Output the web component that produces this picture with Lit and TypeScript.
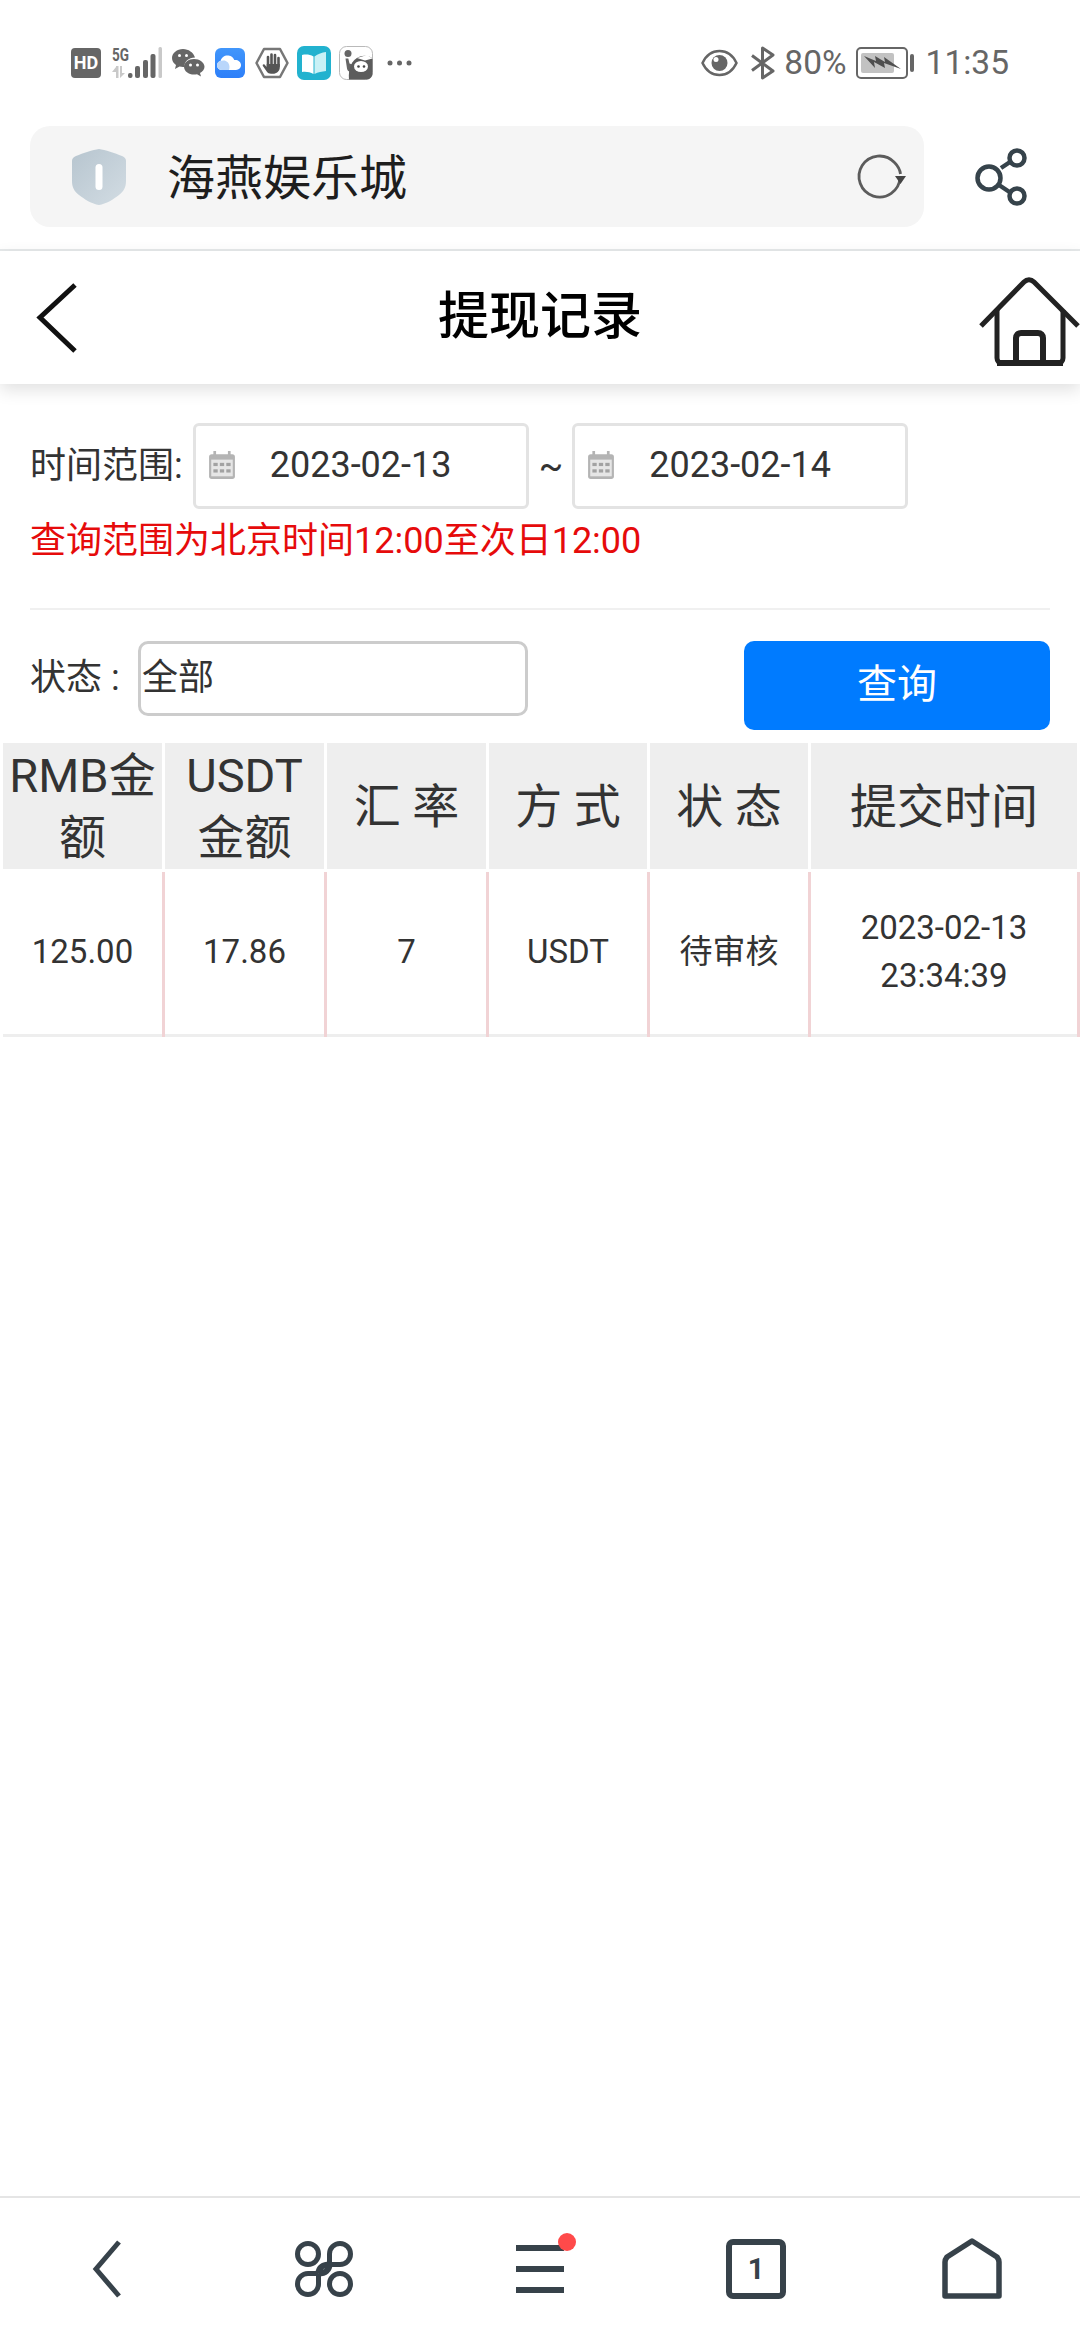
import { LitElement, css, html, svg } from 'lit';
import { customElement } from 'lit/decorators.js';

const HEADS = ['RMB金额', 'USDT金额', '汇 率', '方 式', '状 态', '提交时间'];
const ROW = ['125.00', '17.86', '7', 'USDT', '待审核', '2023-02-13 23:34:39'];

const calendar = svg`
  <rect x="1" y="3" width="24" height="23" rx="2.5" fill="#b4b4b4" />
  <rect x="5" y="0" width="2.5" height="5" fill="#b4b4b4" />
  <rect x="18.5" y="0" width="2.5" height="5" fill="#b4b4b4" />
  <rect x="3" y="8" width="20" height="15.5" fill="#e6e6e6" />
  <g fill="#a2a2a2">
    <rect x="5" y="11" width="4" height="3" /><rect x="11" y="11" width="4" height="3" /><rect x="17" y="11" width="4" height="3" />
    <rect x="5" y="17" width="4" height="3" /><rect x="11" y="17" width="4" height="3" /><rect x="17" y="17" width="4" height="3" />
  </g>`;

@customElement('app-root')
export class AppRoot extends LitElement {
  static styles = css`
    :host {
      display: block;
      font-family: Roboto, "Noto Sans CJK SC", sans-serif;
      color: #333;
      background: #fff;
    }
    * { box-sizing: border-box; }
    svg { display: block; flex: none; overflow: visible; }

    .page {
      display: flex;
      flex-direction: column;
      height: 2340px;
      overflow: hidden;
    }

    .status {
      display: flex;
      justify-content: space-between;
      align-items: center;
      height: 125px;
      padding: 0 71px;
      color: #666;
      font-size: 33.5px;
    }
    .status-left, .status-right, .apps { display: flex; align-items: center; }
    .status-left { gap: 10px; }
    .apps { gap: 8px; }
    .hd {
      width: 30px;
      height: 30px;
      border-radius: 4px;
      background: #666;
      color: #fff;
      font-size: 18px;
      font-weight: 700;
      line-height: 30px;
      text-align: center;
    }
    .dots { margin-left: 4px; }
    .bt { margin-left: 12px; }
    .pct { margin-left: 9px; }
    .battery { margin-left: 9px; }
    .time { margin-left: 12px; }

    .browser {
      display: flex;
      align-items: center;
      height: 126px;
      padding: 0 0 21px 30px;
      border-bottom: 2px solid #e6e9ea;
    }
    .url {
      display: flex;
      align-items: center;
      width: 894px;
      height: 101px;
      padding: 0 18px 0 42px;
      border-radius: 20px;
      background: #f5f5f5;
      color: #1e1e1e;
      font-size: 48px;
    }
    .url-text { flex: 1; margin-left: 41px; padding-bottom: 6px; }
    .share { margin-left: 50px; }

    .bar {
      position: relative;
      display: grid;
      grid-template-columns: 1fr auto 1fr;
      align-items: center;
      height: 133px;
      background: #fff;
      box-shadow: 0 6px 16px rgba(0, 0, 0, 0.12);
    }
    .bar-title {
      padding-bottom: 12px;
      color: #000;
      font-size: 51px;
      font-weight: 500;
    }
    .bar-home { justify-self: end; margin-top: 4px; }
    .bar-back { margin-left: 30px; }

    .form { padding: 39px 30px 0; }
    .range {
      display: flex;
      align-items: center;
      font-size: 36px;
    }
    .range-label { padding-bottom: 8px; }
    .date {
      display: flex;
      align-items: center;
      width: 336px;
      height: 86px;
      padding: 0 0 2px 12px;
      margin-left: 10px;
      border: 3px solid #e3e3e3;
      border-radius: 6px;
    }
    .date span { margin-left: 34px; }
    .tilde { margin-left: 10px; margin-right: -1px; }
    .note {
      height: 101px;
      padding-top: 5px;
      border-bottom: 2px solid #f0f0f0;
      color: #e60b0b;
      font-size: 36px;
      line-height: 54px;
    }
    .filter {
      display: flex;
      align-items: flex-start;
      padding-top: 31px;
      font-size: 36px;
    }
    .filter-label { width: 108px; height: 75px; line-height: 74px; white-space: pre; }
    .select {
      width: 390px;
      height: 75px;
      padding-left: 1px;
      border: 3px solid #ccc;
      border-radius: 10px;
      line-height: 69px;
    }
    .query {
      width: 306px;
      height: 89px;
      margin-left: auto;
      border-radius: 10px;
      background: #007bff;
      color: #fff;
      font-size: 40px;
      line-height: 88px;
      text-align: center;
    }

    table {
      width: 1080px;
      margin-top: 10px;
      border-collapse: separate;
      border-spacing: 3px;
      table-layout: fixed;
    }
    th {
      height: 126px;
      padding: 2px 0 0;
      background: #eee;
      font-size: 47px;
      font-weight: 400;
      line-height: 62px;
      text-align: center;
    }
    th:nth-child(-n+3) { width: 159px; }
    th:nth-child(4), th:nth-child(5) { width: 158px; }
    td {
      height: 165px;
      padding: 0 0 2px;
      border-bottom: 3px solid #eee;
      box-shadow: 3px 0 0 #f1d3d5;
      font-size: 33px;
      line-height: 48px;
      text-align: center;
    }

    .nav {
      display: grid;
      grid-template-columns: repeat(5, 216px);
      justify-items: center;
      align-items: center;
      height: 144px;
      margin-top: auto;
      border-top: 2px solid #e5e5e5;
    }
  `;

  private statusLeft() {
    return html`
      <div class="status-left">
        <div class="hd">HD</div>
        <svg width="51" height="32" viewBox="0 0 51 32">
          <text x="1" y="14" font-size="18" font-weight="700" fill="#666" textLength="17" lengthAdjust="spacingAndGlyphs">5G</text>
          <g fill="#c9c9c9">
            <rect x="5" y="19" width="2.500" height="12" /><path d="M1 25l4-5v5zM9 19v12l5-5h-3v-7z" />
            <rect x="47.500" y="0" width="3.500" height="31" rx="1.500" />
          </g>
          <g fill="#666">
            <rect x="17" y="26" width="4.500" height="5" rx="2" />
            <rect x="24" y="19" width="5" height="12" rx="2" />
            <rect x="32" y="13" width="5" height="18" rx="2" />
            <rect x="39.500" y="7" width="5" height="24" rx="2" />
          </g>
        </svg>
        <svg width="33" height="30" viewBox="0 0 33 30">
          <path d="M11 1C5 1 0 5 0 10c0 3 1.500 5.200 4 7l-1 4 4.500-2.500c1.200.3 2.300.5 3.500.5 .6 0 1 0 1.500-.1C12 14 16.500 9.500 23 9.500 21.500 4.500 16.500 1 11 1z" fill="#666" />
          <path d="M22 11c-5.500 0-10 3.400-10 7.800s4.500 7.800 10 7.800c1 0 2-.1 3-.4l4 2.300-1-3.500c2.800-1.500 4.500-3.700 4.500-6.200 0-4.400-5-7.800-10.500-7.800z" fill="#666" />
          <g fill="#fff">
            <circle cx="7.500" cy="7.500" r="1.500" /><circle cx="14.500" cy="7.500" r="1.500" />
            <circle cx="18.500" cy="17" r="1.500" /><circle cx="25.500" cy="17" r="1.500" />
          </g>
        </svg>
        <svg width="30" height="30" viewBox="0 0 30 30">
          <defs>
            <linearGradient id="cl" x1="0" y1="0" x2="0" y2="1">
              <stop offset="0" stop-color="#4196fb" /><stop offset="1" stop-color="#2d7ff9" />
            </linearGradient>
          </defs>
          <rect width="30" height="30" rx="6" fill="url(#cl)" />
          <path d="M7 22c-3 0-5-2-5-4.500 0-2.200 1.500-4 3.500-4.400C6.500 9 10 7 13.500 7.500c3 .4 5 2.300 5.800 4.600 3-.6 6.700 1.500 6.700 5 0 2.800-2 4.900-5 4.900z" fill="#fff" />
          <path d="M7 22c-3 0-5-2-5-4.500 0-2.200 1.500-4 3.500-4.400 2-1.200 5.500-1 7.500 1.400 1.500 2 2 5 1 7.500z" fill="#b9d6fb" />
        </svg>
        <div class="apps">
          <svg width="34" height="32" viewBox="0 0 34 32">
            <path d="M9 2h16l7.500 14L25 30H9L1.500 16z" fill="none" stroke="#777" stroke-width="2.500" stroke-linejoin="round" />
            <g fill="none" stroke="#555" stroke-width="2.600" stroke-linecap="round">
              <path d="M13 20V10M16.500 18V7.500M20 18V8M23.500 19V11" />
            </g>
            <path d="M11.700 17v3l-2-2.200c-1-1.100-2.600 0-1.800 1.300l3.800 5.400c1 1.500 2.500 2.200 4.300 2.200h2c3.500 0 6.800-2.500 6.800-6.500V17z" fill="#555" />
          </svg>
          <svg width="34" height="34" viewBox="0 0 34 34">
            <rect width="34" height="34" rx="7" fill="#22b2cf" />
            <path d="M5 9c4-1 8-.5 11.500 1.500V28C13 26 9 25.500 5 26z" fill="#fff" />
            <path d="M17.500 10.500C21 8 25 6.500 29 6v19c-4 .5-8 1-11.500 3z" fill="#c8f1f6" />
          </svg>
          <svg width="34" height="34" viewBox="0 0 34 34">
            <rect x=".5" y=".5" width="33" height="33" rx="7" fill="#fff" stroke="#b9b9b9" />
            <circle cx="9" cy="7.500" r="3.500" fill="#666" />
            <path d="M6.500 12.500l1.500 10c.5 3 3 4 4.500 2l1-6-3-1-1.200-5z" fill="#666" />
            <path d="M10 33.500c-1-10 2-20 11-23 5-1.500 10-.5 12.500 2.500V27c0 3.500-2 6.500-6 6.500z" fill="#5c5c5c" />
            <path d="M18 12l10-3 5.500 3.500L26 14.500z" fill="#fff" />
            <ellipse cx="22" cy="20.500" rx="7" ry="5.500" fill="#fff" />
            <circle cx="19.500" cy="20.500" r="1.300" fill="#444" /><circle cx="25" cy="20.500" r="1.300" fill="#444" />
          </svg>
        </div>
        <svg class="dots" width="25" height="8" viewBox="0 0 25 8">
          <circle cx="3" cy="4" r="2.500" fill="#666" /><circle cx="12.500" cy="4" r="2.500" fill="#666" /><circle cx="22" cy="4" r="2.500" fill="#666" />
        </svg>
      </div>`;
  }

  private statusRight() {
    return html`
      <div class="status-right">
        <svg width="37" height="28" viewBox="0 0 37 28">
          <path d="M1.500 14C5 6.500 11 2 18.500 2S32 6.500 35.500 14C32 21.500 26 26 18.500 26S5 21.500 1.500 14z" fill="none" stroke="#666" stroke-width="2.500" />
          <circle cx="18.500" cy="14" r="8" fill="#666" />
          <circle cx="15" cy="10.500" r="2.500" fill="#fff" />
        </svg>
        <svg class="bt" width="25" height="32" viewBox="0 0 25 32">
          <path d="M2 8.500l21 15.500-10.500 7V1L23 8 2 23.500" fill="none" stroke="#666" stroke-width="3" stroke-linejoin="round" />
        </svg>
        <span class="pct">80%</span>
        <svg class="battery" width="58" height="32" viewBox="0 0 58 32">
          <rect x="1" y="1" width="50" height="30" rx="4" fill="none" stroke="#666" stroke-width="2" />
          <rect x="5" y="6" width="33" height="20" rx="2" fill="#c2c2c2" />
          <path d="M8 9l12 5-1-5 10 6-1-5 17 12-17-6 1 5-11-6 1 6z" fill="#4f4f4f" />
          <rect x="54" y="7" width="4" height="18" rx="2" fill="#666" />
        </svg>
        <span class="time">11:35</span>
      </div>`;
  }

  private browserBar() {
    return html`
      <div class="browser">
        <div class="url">
          <svg width="54" height="56" viewBox="0 0 54 56">
            <defs>
              <linearGradient id="sh" x1="0" y1="0" x2="1" y2="1">
                <stop offset="0" stop-color="#b7c5cf" /><stop offset="1" stop-color="#d2dce3" />
              </linearGradient>
            </defs>
            <path d="M27 0C33 1 43 4 50 7c3 1 4 3 4 5v20c0 6-2 10-7 14-5 4-13 9-20 10-7-1-15-6-20-10-5-4-7-8-7-14V12c0-2 1-4 4-5C11 4 21 1 27 0z" fill="url(#sh)" />
            <rect x="23.500" y="15" width="7" height="26" rx="3.500" fill="#fff" />
          </svg>
          <span class="url-text">海燕娱乐城</span>
          <svg width="48" height="46" viewBox="0 0 48 46">
            <path d="M42 23.500A20.500 20.500 0 1 1 36.500 8.500C40 12 42 16 42.500 20" fill="none" stroke="#5c5c5c" stroke-width="2.800" />
            <path d="M37 22h11l-5.500 8z" fill="#444" />
          </svg>
        </div>
        <svg class="share" width="54" height="58" viewBox="0 0 54 58">
          <g fill="none" stroke="#36434b" stroke-width="4.500">
            <circle cx="15" cy="30" r="11.500" />
            <circle cx="43" cy="10" r="7.500" />
            <circle cx="43" cy="48" r="7.500" />
            <path d="M27 20l9-6M25 37l12 8" />
          </g>
        </svg>
      </div>`;
  }

  private titleBar() {
    return html`
      <div class="bar">
        <svg class="bar-back" width="50" height="72" viewBox="0 0 50 72">
          <path d="M45 3L10 35.500 45 69" fill="none" stroke="#111" stroke-width="5" />
        </svg>
        <div class="bar-title">提现记录</div>
        <svg class="bar-home" width="102" height="92" viewBox="0 0 102 92">
          <g fill="none" stroke="#222" stroke-width="5">
            <path d="M3 52L46 8c3-3 7-3 10 0l44 44" />
            <path d="M19 36v48c0 3 2 5 5 5h56c3 0 5-2 5-5V36" />
            <path d="M38 89V64c0-3 2-5 5-5h17c3 0 5 2 5 5v25" stroke-width="6" />
            <path d="M19 89h66" stroke-width="6" />
          </g>
        </svg>
      </div>`;
  }

  private filterForm() {
    return html`
      <div class="form">
        <div class="range">
          <span class="range-label">时间范围:</span>
          <div class="date"><svg width="28" height="28" viewBox="0 0 26 26">${calendar}</svg><span>2023-02-13</span></div>
          <span class="tilde">~</span>
          <div class="date"><svg width="28" height="28" viewBox="0 0 26 26">${calendar}</svg><span>2023-02-14</span></div>
        </div>
        <div class="note">查询范围为北京时间12:00至次日12:00</div>
        <div class="filter">
          <span class="filter-label">状态 : </span>
          <div class="select">全部</div>
          <div class="query">查询</div>
        </div>
      </div>`;
  }

  private navBar() {
    return html`
      <nav class="nav">
        <svg width="72" height="72" viewBox="0 0 72 72">
          <path d="M47 9L24 36l23 27" fill="none" stroke="#37424a" stroke-width="5" />
        </svg>
        <svg width="72" height="72" viewBox="0 0 72 72">
          <g fill="none" stroke="#37424a" stroke-width="5">
            <circle cx="20" cy="21" r="10.500" />
            <circle cx="52" cy="51" r="10.500" />
            <path d="M41.500 31.500V21a10.500 10.500 0 1 1 10.500 10.500H41.500" />
            <path d="M30.500 40.500V51A10.500 10.500 0 1 1 20 40.500H30.500" />
            <path d="M41.500 31c0 6-4 9.500-11 9.500M41.500 31.500c-6 0-11 3-11 9" stroke-width="6" />
          </g>
        </svg>
        <svg width="72" height="72" viewBox="0 0 72 72">
          <g fill="#37424a">
            <rect x="12" y="12" width="48" height="6" />
            <rect x="12" y="33" width="48" height="6" />
            <rect x="12" y="54" width="48" height="6" />
          </g>
          <circle cx="63" cy="9" r="9" fill="#ff4a4a" />
        </svg>
        <svg width="72" height="72" viewBox="0 0 72 72">
          <rect x="9" y="9" width="54" height="54" rx="4" fill="none" stroke="#37424a" stroke-width="6" />
          <text x="36" y="46" text-anchor="middle" font-size="29" font-weight="700" fill="#37424a">1</text>
        </svg>
        <svg width="72" height="72" viewBox="0 0 72 72">
          <path d="M9 63V29c0-2 .5-3 2-5L36 8l25 16c1.500 2 2 3 2 5v34z" fill="none" stroke="#37424a" stroke-width="5.500" stroke-linejoin="round" />
        </svg>
      </nav>`;
  }

  render() {
    return html`
      <div class="page">
        <div class="status">${this.statusLeft()}${this.statusRight()}</div>
        ${this.browserBar()}
        ${this.titleBar()}
        ${this.filterForm()}
        <table>
          <thead><tr>${HEADS.map((h) => html`<th>${h}</th>`)}</tr></thead>
          <tbody><tr>${ROW.map((c) => html`<td>${c}</td>`)}</tr></tbody>
        </table>
        ${this.navBar()}
      </div>
    `;
  }
}
